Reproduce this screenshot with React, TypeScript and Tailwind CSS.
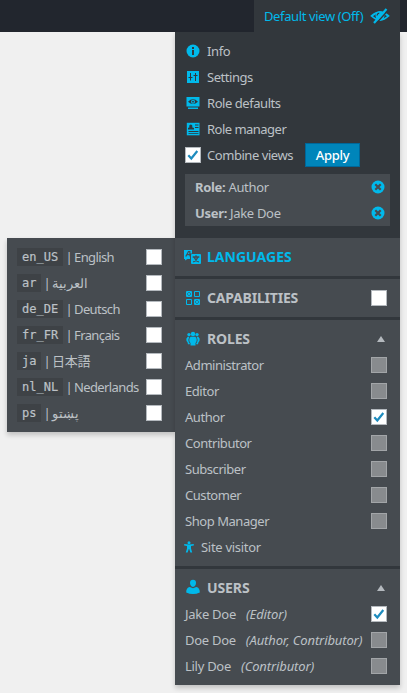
import React from "react";

const CYAN = "text-[#00b9eb]";

function Svg({ children, className = "", size = 14, box = "0 0 14 14" }: { children: React.ReactNode; className?: string; size?: number; box?: string }) {
  return (
    <svg width={size} height={size} viewBox={box} fill="currentColor" className={`shrink-0 ${CYAN} ${className}`}>
      {children}
    </svg>
  );
}

const InfoIcon = () => (
  <Svg>
    <circle cx="7" cy="7" r="6.500" />
    <path d="M6 3h2v2H6zM6 6h2v5H6z" fill="#32373c" />
  </Svg>
);

const SettingsIcon = () => (
  <Svg>
    <path d="M1 1h12v12H1z" />
    <path d="M4 3h1v4h1.500v1H5v2.500H4V8H2.500V7H4zM9 3h1v2h1.500v1H10v5H9V6H7.500V5H9z" fill="#32373c" />
  </Svg>
);

const DefaultsIcon = () => (
  <Svg>
    <path d="M.5 1h13v9.500H.5zM2 11.500h10v1.500H2z" />
    <path d="M2 5.700Q7 .8 12 5.700Q7 10.400 2 5.700z" fill="#32373c" />
    <circle cx="7" cy="5.700" r="2" />
    <circle cx="7" cy="5.700" r=".9" fill="#32373c" />
  </Svg>
);

const ManagerIcon = () => (
  <Svg>
    <path d="M.8.800h12.700v12.500H.8z" />
    <path d="M2 7.500V6l1.500-.8a1.600 1.600 0 1 1 2.600 0L8 6v1.500zM9 2.500h3.500v1H9zM9 5h3.500v1H9zM2.500 9h10v1h-10zM2.500 11.200h10v.9h-10z" fill="#32373c" />
  </Svg>
);

const EyeOffIcon = () => (
  <Svg size={20} box="0 0 20 20">
    <path d="M1.500 10Q10 2.500 18.500 10Q10 18 1.500 10z" fill="none" stroke="currentColor" strokeWidth="1.700" />
    <circle cx="10" cy="9.800" r="4.500" />
    <path d="M7 9.500q.3-2 2.200-2.300" fill="none" stroke="#32373c" strokeWidth="1.300" />
    <path d="M6 17.500 17.500 5" stroke="#32373c" strokeWidth="1.500" />
    <path d="M4 17 16.500 3" stroke="currentColor" strokeWidth="2.200" />
  </Svg>
);

const LanguageIcon = () => (
  <Svg size={18} box="0 0 18 18" className="-ml-0.5">
    <path d="M1.500 2H9v3.500H7V11H4.500L2 12.500V11H1V2z" />
    <path d="m2.800 8.500 2.700-5h1.300l.2 5M4 6.700h3" fill="none" stroke="#464b50" strokeWidth="1.200" />
    <path d="M9 6h8q1 0 1 1v8q0 1-1 1H9q-1 0-1-1V7q0-1 1-1z" />
    <path d="M9.700 9h6.600M13 7.300V9M11.300 9.500q1 3 4.500 4.500M14.700 9.500q-1 3-4.500 4.500" fill="none" stroke="#464b50" strokeWidth="1.300" />
  </Svg>
);

const CapabilitiesIcon = () => (
  <Svg size={16} box="0 0 16 16">
    <path d="M1.500 1.500h5v5h-5zM9.500 1.500h5v5h-5zM1.500 9.500h5v5h-5zM9.500 9.500h5v5h-5z" fill="none" stroke="currentColor" />
    <path d="m2 2 4 4m0-4L2 6m8 4 4 4m0-4-4 4" stroke="currentColor" strokeWidth="1.300" />
  </Svg>
);

const GroupIcon = () => (
  <Svg size={16} box="0 0 16 16">
    <circle cx="8" cy="3" r="2.200" />
    <circle cx="4" cy="3.600" r="1.700" />
    <circle cx="12" cy="3.600" r="1.700" />
    <path d="M5.700 5.700h4.600q2.200 1.800 1 5.300L10.500 12v2.500h-5V12l-.8-1q-1.200-3.500 1-5.300z" />
    <path d="M2.700 5.700h1.600q-1.600 3-.3 5.800l.7.500v1.300H3l-.5-2L1.500 10Q.5 7.500 2.700 5.700zM13.300 5.700h-1.600q1.600 3 .3 5.800l-.7.500v1.300H13l.5-2 1-1.300q1-2.500-1.200-4.300z" />
  </Svg>
);

const UserIcon = () => (
  <Svg size={16} box="0 0 16 16" className="-mt-0.5">
    <path d="M8 .8c2 0 3 1.300 3 3S10 8 8 8 5 5.500 5 3.800s1-3 3-3zM4.800 8 8 9.200 11.200 8c2.500.5 3.600 2 3.600 5.500Q8 16.500 1.200 13.500C1.200 10 2.300 8.500 4.800 8z" />
  </Svg>
);

const VisitorIcon = () => (
  <Svg size={12} box="0 0 12 12">
    <circle cx="6" cy="1.700" r="1.500" />
    <path d="M1.200 3 6 3.400l4.800-.4v1.500L8 5v2.500l1.200 4H7.400L6.200 8h-.4l-1.200 3.500H2.800l1.200-4V5L1.200 4.500z" />
  </Svg>
);

const RemoveIcon = () => (
  <Svg>
    <circle cx="7" cy="7" r="6.500" />
    <path d="m4.300 4.300 5.400 5.400m0-5.400-5.400 5.400" stroke="#464b50" strokeWidth="2.200" />
  </Svg>
);

function Check({ on = false, dim = false }: { on?: boolean; dim?: boolean }) {
  return (
    <span className={`flex size-4 shrink-0 items-center justify-center border ${dim ? "border-[#a2a5a8] bg-[#888b8e]" : "border-[#b4b9be] bg-white"}`}>
      {on && (
        <svg width="12" height="12" viewBox="0 0 12 12" fill="none" stroke="#1e8cbe" strokeWidth="2.200">
          <path d="m1.300 6.300 3 3.200 6-7.500" />
        </svg>
      )}
    </span>
  );
}

function MenuRow({ icon, label, track }: { icon: React.ReactNode; label: string; track: string }) {
  return (
    <div className="flex h-[26px] items-center gap-[7px] pl-[11px]">
      {icon}
      <span className={track}>{label}</span>
    </div>
  );
}

function Heading({ icon, label, children, className = "" }: { icon: React.ReactNode; label: string; children?: React.ReactNode; className?: string }) {
  return (
    <div className="flex h-[26px] items-center pr-[13px] pl-[10px]">
      <span className="flex w-[22px] shrink-0">{icon}</span>
      <span className={`flex-1 text-[14px] font-bold ${className}`}>{label}</span>
      {children}
    </div>
  );
}

const Arrow = () => <span className="mr-[2px] h-0 w-0 border-x-[4.500px] border-b-[6.500px] border-x-transparent border-b-[#b4b9be]" />;

const languages = [
  { code: "en_US", name: "English", box: "w-[46px]", track: "tracking-[-0.600px]" },
  { code: "ar", name: "العربية", box: "w-6", track: "text-[13px]" },
  { code: "de_DE", name: "Deutsch", box: "w-[46px]", track: "tracking-[-0.600px]" },
  { code: "fr_FR", name: "Français", box: "w-[46px]", track: "tracking-[-0.600px]" },
  { code: "ja", name: "日本語", box: "w-6", track: "tracking-[-0.300px]" },
  { code: "nl_NL", name: "Nederlands", box: "w-[46px]", track: "tracking-[-0.620px]" },
  { code: "ps", name: "پښتو", box: "w-6", track: "text-[13px]" },
];

const roles = ["Administrator", "Editor", "Author", "Contributor", "Subscriber", "Customer", "Shop Manager"];

const users = [
  { name: "Jake Doe", role: "(Editor)", on: true },
  { name: "Doe Doe", role: "(Author, Contributor)", on: false },
  { name: "Lily Doe", role: "(Contributor)", on: false },
];

export default function App() {
  return (
    <div className="relative h-[693px] w-[407px] overflow-hidden bg-[#f0f0f0] text-[13px] leading-[26px] whitespace-nowrap text-[#bcc1c6] [font-family:'Noto_Sans','Open_Sans','Noto_Sans_CJK_JP',sans-serif]">
      <header className="flex h-8 justify-end bg-[#22262e] pr-[7px]">
        <div className="relative z-10 flex w-[146px] items-center justify-between bg-[#32373c] pr-[10px] pl-[10px] text-[#00b9eb]">
          <span className="tracking-[-0.380px]">Default view (Off)</span>
          <EyeOffIcon />
        </div>
      </header>

      <div className="flex items-start pl-[7px]">
        <div className="mt-[206px] w-[168px] bg-[#464b50] py-1.5 shadow-[0_3px_5px_rgba(0,0,0,0.2)]">
          {languages.map((l) => (
            <div key={l.code} className="flex h-[26px] items-center pr-[13px] pl-[10px]">
              <code className={`mr-[2px] h-[18px] shrink-0 bg-[#3e4246] pl-[5px] text-[12px] leading-[18px] [font-family:'DejaVu_Sans_Mono',monospace] [-webkit-text-stroke:0.200px] ${l.box}`}>{l.code}</code>
              <span className="w-[9px] pr-px text-center">|</span>
              <span dir="auto" className={l.track}>{l.name}</span>
              <span className="ml-auto"><Check /></span>
            </div>
          ))}
        </div>

        <main className="w-[225px] bg-[#32373c] shadow-[0_3px_5px_rgba(0,0,0,0.2)]">
          <section className="h-[206px] pt-1.5">
            <MenuRow icon={<InfoIcon />} label="Info" track="tracking-[-0.400px]" />
            <MenuRow icon={<SettingsIcon />} label="Settings" track="tracking-[-0.450px]" />
            <MenuRow icon={<DefaultsIcon />} label="Role defaults" track="tracking-[-0.450px]" />
            <MenuRow icon={<ManagerIcon />} label="Role manager" track="tracking-[-0.520px]" />
            <div className="flex h-[26px] items-center pl-[10px]">
              <Check on />
              <span className="ml-1.5 w-[98px] tracking-[-0.450px]">Combine views</span>
              <span className="h-6 w-[55px] border border-[#006799] bg-[#0085ba] text-center leading-[22px] font-medium tracking-[-0.300px] text-white">Apply</span>
            </div>
            <div className="mx-[10px] mt-1.5 bg-[#464b50]">
              {[["Role:", "Author"], ["User:", "Jake Doe"]].map(([k, v]) => (
                <div key={k} className="flex h-[26px] items-center justify-between pr-[5px] pl-[10px]">
                  <span className="tracking-[-0.320px]"><b>{k}</b> {v}</span>
                  <RemoveIcon />
                </div>
              ))}
            </div>
          </section>

          <div className="flex flex-col gap-[3px]">
            <section className="bg-[#464b50] py-1.5">
              <Heading icon={<LanguageIcon />} label="LANGUAGES" className="tracking-[0.020px] text-[#00b9eb]" />
            </section>
            <section className="bg-[#464b50] py-1.5">
              <Heading icon={<CapabilitiesIcon />} label="CAPABILITIES" className="tracking-[-0.200px]"><Check /></Heading>
            </section>
            <section className="bg-[#464b50] py-1.5">
              <Heading icon={<GroupIcon />} label="ROLES" className="tracking-[-0.150px]"><Arrow /></Heading>
              {roles.map((r) => (
                <div key={r} className="flex h-[26px] items-center justify-between pr-[13px] pl-[10px]">
                  <span className="tracking-[-0.450px]">{r}</span>
                  <Check on={r === "Author"} dim={r !== "Author"} />
                </div>
              ))}
              <div className="flex h-[26px] items-center gap-[6px] pl-2">
                <VisitorIcon />
                <span className="tracking-[-0.300px]">Site visitor</span>
              </div>
            </section>
            <section className="bg-[#464b50] py-1.5">
              <Heading icon={<UserIcon />} label="USERS" className="tracking-[-0.100px]"><Arrow /></Heading>
              {users.map((u) => (
                <div key={u.name} className="flex h-[26px] items-center pr-[13px] pl-[10px]">
                  <span className="tracking-[-0.280px]">{u.name}</span>
                  <i className="ml-[10px] tracking-[-0.120px]">{u.role}</i>
                  <span className="ml-auto"><Check on={u.on} dim={!u.on} /></span>
                </div>
              ))}
            </section>
          </div>
        </main>
      </div>
    </div>
  );
}
